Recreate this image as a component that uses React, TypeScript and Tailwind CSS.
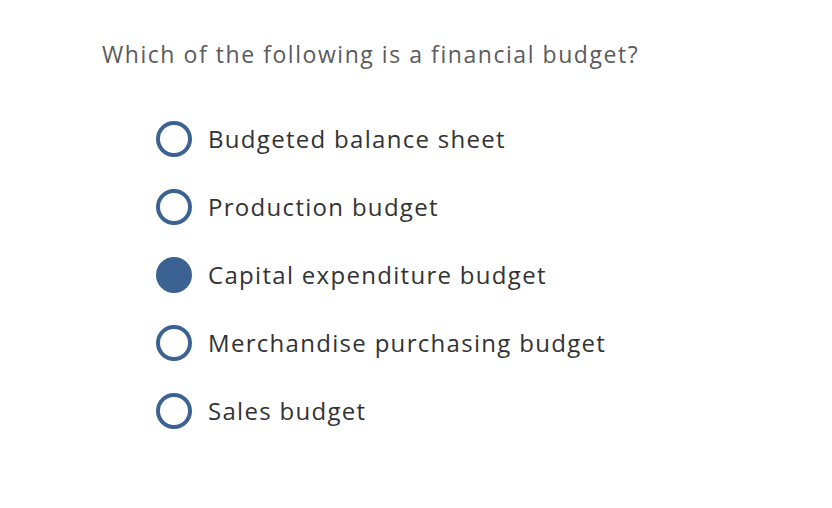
import React from "react";

const options = [
  "Budgeted balance sheet",
  "Production budget",
  "Capital expenditure budget",
  "Merchandise purchasing budget",
  "Sales budget",
];

export default function App() {
  return (
    <div className="w-[832px] h-[508px] bg-white" style={{ fontFamily: "'Open Sans', Lato, sans-serif" }}>
      <div className="pl-[102px] pt-[38px]">
        <div className="text-[23px] leading-[32px] tracking-[1.55px] text-[#5b5b5b]">Which of the following is a financial budget?</div>
        <div className="mt-[51px] pl-[54px] flex flex-col gap-[32px]">
          {options.map((o, i) => (
            <div key={o} className="flex items-center h-[36px]">
              {i === 2 ? (
                <div className="w-[36px] h-[36px] rounded-full bg-[#3b6292]" />
              ) : (
                <div className="w-[36px] h-[36px] rounded-full border-[4px] border-[#3b6292]" />
              )}
              <div className="ml-[16px] text-[24px] leading-[32px] tracking-[1.3px] text-[#333333]">{o}</div>
            </div>
          ))}
        </div>
      </div>
    </div>
  );
}
